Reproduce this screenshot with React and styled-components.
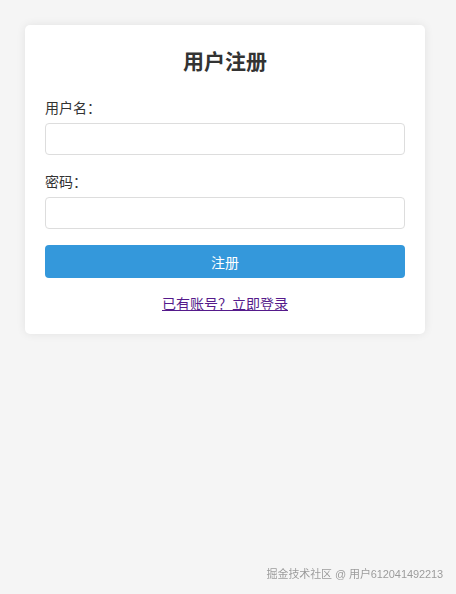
import React from "react";
import styled, { createGlobalStyle } from "styled-components";

const Global = createGlobalStyle`
  html, body {
    margin: 0;
    padding: 0;
    background: #f5f5f5;
    min-height: 100%;
  }
  body {
    font-family: "Liberation Sans", "Noto Sans CJK SC", sans-serif;
    font-size: 14px;
    color: #333;
  }
`;

const Page = styled.div`
  padding: 25px;
  min-height: 594px;
  box-sizing: border-box;
`;

const Card = styled.form`
  width: 400px;
  box-sizing: border-box;
  background: #fff;
  border-radius: 5px;
  box-shadow: 0 0 10px rgba(0, 0, 0, 0.08);
  padding: 20px 20px 19px;
  display: flex;
  flex-direction: column;
`;

const Title = styled.h2`
  margin: 0 0 20px;
  font-size: 21px;
  line-height: 33px;
  font-weight: 700;
  text-align: center;
  color: #333;
`;

const Group = styled.div`
  display: flex;
  flex-direction: column;
  margin-bottom: 17px;
`;

const Label = styled.label`
  font-size: 14px;
  line-height: 21px;
  color: #333;
  margin-bottom: 4px;
`;

const Input = styled.input`
  height: 32px;
  box-sizing: border-box;
  border: 1px solid #ddd;
  border-radius: 4px;
  padding: 0 8px;
  font-size: 14px;
  outline: none;
`;

const Button = styled.button`
  height: 33px;
  margin-top: -1px;
  border: none;
  border-radius: 4px;
  background: #3498db;
  color: #fff;
  font-family: inherit;
  font-size: 14px;
  cursor: pointer;
`;

const LinkRow = styled.p`
  margin: 16px 0 0;
  text-align: center;
  line-height: 21px;
`;

const Link = styled.a`
  color: #551a8b;
  text-decoration: underline;
  font-size: 14px;
`;

const Watermark = styled.div`
  position: fixed;
  right: 13px;
  bottom: 13px;
  font-size: 11px;
  line-height: 14px;
  letter-spacing: -0.1px;
  color: #9a9a9a;
  text-shadow: 0 0 1px #fff;
`;

export default function App() {
  return (
    <Page>
      <Global />
      <Card onSubmit={(e) => e.preventDefault()}>
        <Title>用户注册</Title>
        <Group>
          <Label>用户名：</Label>
          <Input type="text" />
        </Group>
        <Group>
          <Label>密码：</Label>
          <Input type="password" />
        </Group>
        <Button type="submit">注册</Button>
        <LinkRow>
          <Link href="#">已有账号？立即登录</Link>
        </LinkRow>
      </Card>
      <Watermark>掘金技术社区 @ 用户612041492213</Watermark>
    </Page>
  );
}
